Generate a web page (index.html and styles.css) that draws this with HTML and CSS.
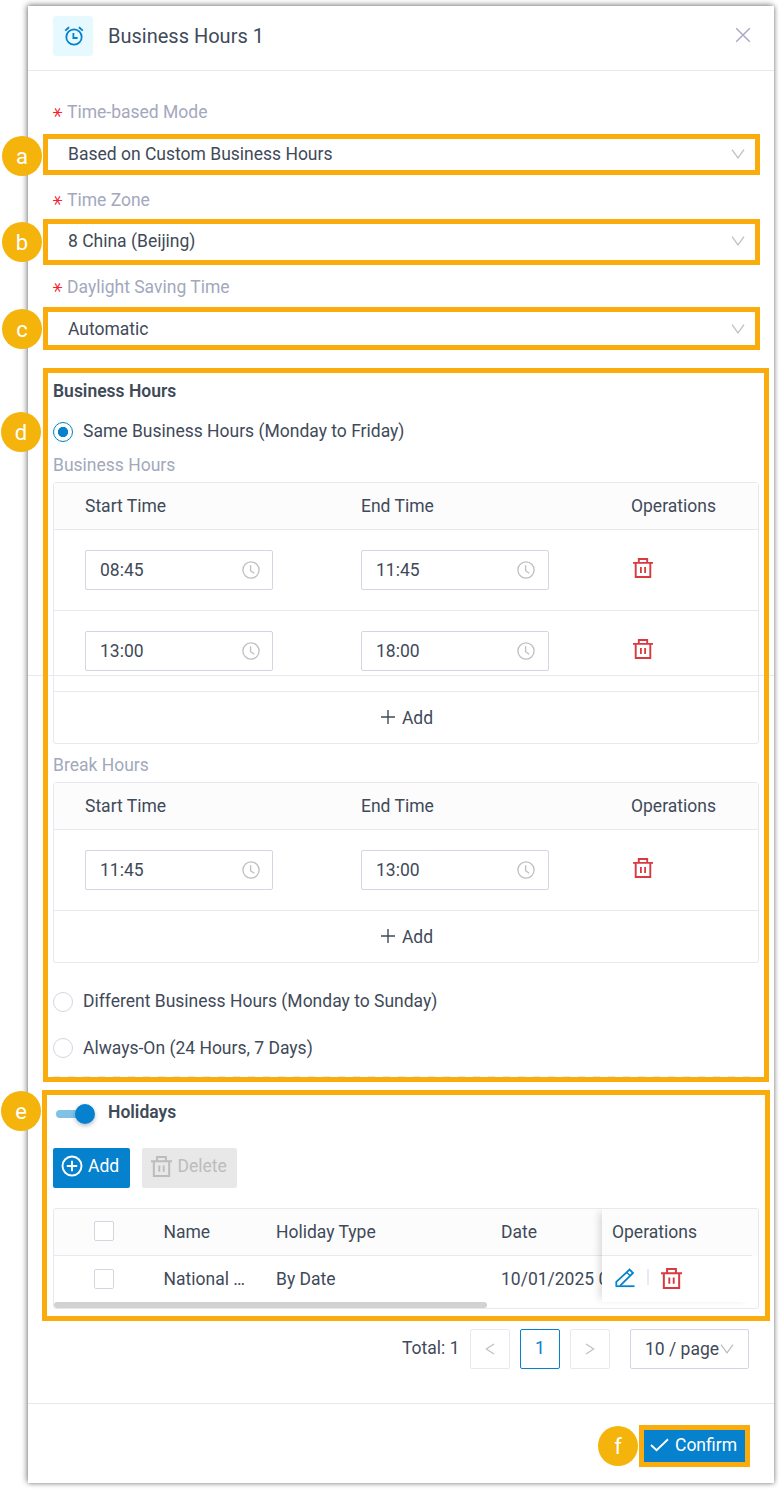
FILE: index.html
```html
<!DOCTYPE html>
<html lang="en">
<head>
<meta charset="utf-8">
<title>Business Hours 1</title>
<link rel="stylesheet" href="styles.css">
</head>
<body>
<svg class="sprite" width="0" height="0">
  <symbol id="trash" viewBox="0 0 20 20"><path d="M0 4.9H20M5.8 4.5V1H14.2V4.5M2.7 5V19H17.3V5" fill="none" stroke="currentColor" stroke-width="1.9"/><path d="M7.9 9V15M12.1 9V15" stroke="currentColor" stroke-width="1.8"/></symbol>
  <symbol id="clock" viewBox="0 0 18 18"><circle cx="9" cy="9" r="8.1" fill="none" stroke="currentColor" stroke-width="1.3"/><path d="M8.6 4.2V9.7L12.2 12.3" fill="none" stroke="currentColor" stroke-width="1.3"/></symbol>
  <symbol id="chevron" viewBox="0 0 14 10"><path d="M1 .7L7 8.8L13 .7" fill="none" stroke="currentColor" stroke-width="1.3"/></symbol>
  <symbol id="plus" viewBox="0 0 16 16"><path d="M8 1V15M1 8H15" fill="none" stroke="currentColor" stroke-width="1.4"/></symbol>
</svg>
<main class="panel">
  <header class="header">
    <span class="logo"><svg width="20" height="20" viewBox="0 0 20 20" fill="none" stroke="currentColor" stroke-width="1.8"><circle cx="10" cy="11" r="7.7"/><path d="M9.4 7V12H13.6M1.2 4.6L5.1 1.3M14.9 1.3L18.8 4.6"/></svg></span>
    <h1 class="title">Business Hours 1</h1>
    <svg class="close" width="16" height="16" viewBox="0 0 16 16"><path d="M1.2 1.2L14.8 14.8M14.8 1.2L1.2 14.8" stroke="currentColor" stroke-width="1.5"/></svg>
  </header>

  <div class="label label-mode"><span class="star">*</span>Time-based Mode</div>
  <div class="mark select select-mode"><b class="badge">a</b><span>Based on Custom Business Hours</span><svg class="arrow" width="14" height="10"><use href="#chevron"/></svg></div>
  <div class="label label-zone"><span class="star">*</span>Time Zone</div>
  <div class="mark select select-zone"><b class="badge">b</b><span>8 China (Beijing)</span><svg class="arrow" width="14" height="10"><use href="#chevron"/></svg></div>
  <div class="label label-dst"><span class="star">*</span>Daylight Saving Time</div>
  <div class="mark select select-dst"><b class="badge">c</b><span>Automatic</span><svg class="arrow" width="14" height="10"><use href="#chevron"/></svg></div>

  <section class="mark hours">
    <b class="badge">d</b>
    <h2 class="heading">Business Hours</h2>
    <div class="option option-same"><i class="radio checked"></i><span>Same Business Hours (Monday to Friday)</span></div>
    <div class="subhead">Business Hours</div>
    <div class="table">
      <div class="row head"><span>Start Time</span><span>End Time</span><span>Operations</span></div>
      <div class="row"><div class="time">08:45<svg width="18" height="18"><use href="#clock"/></svg></div><div class="time time-end">11:45<svg width="18" height="18"><use href="#clock"/></svg></div><svg class="trash" width="20" height="20"><use href="#trash"/></svg></div>
      <div class="row"><div class="time">13:00<svg width="18" height="18"><use href="#clock"/></svg></div><div class="time time-end">18:00<svg width="18" height="18"><use href="#clock"/></svg></div><svg class="trash" width="20" height="20"><use href="#trash"/></svg></div>
      <div class="add"><svg width="16" height="16"><use href="#plus"/></svg>Add</div>
    </div>
    <div class="subhead">Break Hours</div>
    <div class="table">
      <div class="row head"><span>Start Time</span><span>End Time</span><span>Operations</span></div>
      <div class="row"><div class="time">11:45<svg width="18" height="18"><use href="#clock"/></svg></div><div class="time time-end">13:00<svg width="18" height="18"><use href="#clock"/></svg></div><svg class="trash" width="20" height="20"><use href="#trash"/></svg></div>
      <div class="add"><svg width="16" height="16"><use href="#plus"/></svg>Add</div>
    </div>
    <div class="option option-different"><i class="radio"></i><span>Different Business Hours (Monday to Sunday)</span></div>
    <div class="option option-always"><i class="radio"></i><span>Always-On (24 Hours, 7 Days)</span></div>
    <div class="dashes"></div>
    <div class="seam"></div>
  </section>

  <section class="mark holidays">
    <b class="badge">e</b>
    <div class="toggle-row"><span class="toggle"><i class="knob"></i></span><h2 class="toggle-title">Holidays</h2></div>
    <div class="buttons">
      <div class="btn primary"><svg width="22" height="22" viewBox="0 0 22 22" fill="none" stroke="currentColor" stroke-width="1.9"><circle cx="11" cy="11" r="9.5"/><path d="M11 5.8V16.2M5.8 11H16.2"/></svg>Add</div>
      <div class="btn disabled"><svg width="21" height="21"><use href="#trash"/></svg>Delete</div>
    </div>
    <div class="grid">
      <div class="cells cells-head"><i class="check"></i><span>Name</span><span>Holiday Type</span><span>Date</span></div>
      <div class="cells"><i class="check"></i><span>National …</span><span>By Date</span><span>10/01/2025 00:00</span></div>
      <div class="scroll"><div class="thumb"></div></div>
      <div class="fixed">
        <div class="fixed-head">Operations</div>
        <div class="fixed-body">
          <svg class="edit" width="20" height="20" viewBox="0 0 20 20" fill="none" stroke="currentColor"><path d="M1.3 17.6V13.8L14.6 1.6L18 5L5.2 17.6" stroke-width="1.8"/><path d="M11.8 4.4L15 7.6" stroke-width="1.4"/><path d="M.5 18.2H19.5" stroke-width="1.8"/></svg>
          <i class="sep"></i>
          <svg class="trash" width="21" height="21"><use href="#trash"/></svg>
        </div>
      </div>
    </div>
  </section>

  <nav class="pager">
    <span class="total">Total: 1</span>
    <span class="page"><svg width="10" height="14" viewBox="0 0 10 14"><path d="M9 2L1.3 7L9 12" fill="none" stroke="currentColor" stroke-width="1.2"/></svg></span>
    <span class="page current">1</span>
    <span class="page"><svg width="10" height="14" viewBox="0 0 10 14"><path d="M1 2L8.7 7L1 12" fill="none" stroke="currentColor" stroke-width="1.2"/></svg></span>
    <span class="size">10 / page<svg width="14" height="10"><use href="#chevron"/></svg></span>
  </nav>

  <footer class="footer">
    <div class="mark confirm"><b class="badge">f</b><svg width="19" height="14" viewBox="0 0 19 14"><path d="M1 7L6.6 12.2L18 1.2" fill="none" stroke="currentColor" stroke-width="1.9"/></svg>Confirm</div>
  </footer>
</main>
</body>
</html>
```
FILE: styles.css
```css
* { box-sizing: border-box; }
body { margin: 0; background: #fff; color: #3f4a59; font: 17.5px/24px Roboto, "Liberation Sans", sans-serif; height: 1489px; overflow: hidden; }
h1, h2 { margin: 0; font-size: inherit; }
svg { display: block; flex: none; }
.sprite { position: absolute; }
.panel { position: relative; z-index: 0; width: 746px; height: 1477px; margin: 6px 0 0 28px; background: #fff; box-shadow: -1px -1px 6px rgba(0,0,0,.48), 1px 1px 4px rgba(0,0,0,.2); display: flex; flex-direction: column; }

.header { height: 65px; flex: none; border-bottom: 1px solid #e8e8f0; padding: 0 23px 5px 25px; display: flex; align-items: center; }
.logo { width: 40px; height: 40px; padding-left: 1px; border-radius: 3px; background: #e6f9ff; color: #0581cd; display: grid; place-items: center; }
.title { margin-left: 15px; font-size: 20px; font-weight: 400; }
.close { margin-left: auto; margin-bottom: 2px; color: #aaaac6; }

.label { display: flex; align-items: flex-start; padding-left: 25px; color: #a3a8bd; flex: none; }
/* quarter turn puts one arm of the asterisk on the horizontal */
.star { width: 9px; height: 20px; margin: 5px 5px 0 0; color: #f5222d; font: 20px/20px "DejaVu Sans", sans-serif; transform: rotate(90deg); transform-origin: 4.5px 7px; }
.label-mode { height: 63px; padding-top: 29px; }
.label-zone { height: 44px; padding-top: 13px; }
.label-dst { height: 42px; padding-top: 10px; }

.mark { position: relative; border: 5px solid #f9ac0c; flex: none; }
.badge { position: absolute; width: 40px; height: 40px; border-radius: 50%; background: #f5b40c; color: #fff; font-size: 22px; font-weight: 400; line-height: 41px; text-align: center; }
.select { width: 717px; margin-left: 15px; padding: 0 10.5px 0 20px; display: flex; align-items: center; justify-content: space-between; }
.select .badge { left: -46px; }
.select-mode { height: 41px; padding-bottom: 1px; }
.select-mode .badge { top: -3px; }
.select-zone { height: 46px; padding-bottom: 2px; }
.select-zone .badge { top: -2px; }
.select-dst { height: 43px; }
.select-dst .badge { top: -3px; }
.arrow { color: #bfbfbf; }

.hours { width: 726px; height: 714px; margin: 18px 0 0 15px; padding: 0 5px; }
.hours .badge { left: -47px; top: 39px; }
.heading { padding-top: 6px; height: 36px; font-weight: 600; }
.option { display: flex; align-items: center; gap: 10px; height: 24px; }
.option span { margin-bottom: 2px; }
.option-same { margin-top: 11px; }
.radio { width: 20px; height: 20px; border: 1px solid #d5d5e2; border-radius: 50%; }
.checked { border-color: #0581cd; background: radial-gradient(circle, #0581cd 4.8px, #fff 5.4px); }
.subhead { color: #a3a8bd; height: 38px; padding-top: 9px; }
.table { width: 706px; border: 1px solid #e8e8f1; border-radius: 3px; }
.row { display: grid; grid-template-columns: 276px 270px 1fr; align-items: center; height: 81px; padding-left: 31px; border-bottom: 1px solid #e8e8f0; }
.head { height: 47px; background: #fcfcfc; }
.row .trash { margin: 0 0 4px 2px; }
.trash { color: #d93a3f; }
.time { width: 188px; height: 40px; border: 1px solid #d4d4e2; border-radius: 2px; padding: 0 12.5px 0 14px; display: flex; align-items: center; justify-content: space-between; }
.time-end { padding-right: 13px; }
.time svg { color: #bfbfbf; }
.add { height: 51px; padding-left: 1px; display: flex; align-items: center; justify-content: center; gap: 6px; }
.add svg { margin-bottom: 2px; }
.option-different { margin-top: 27px; }
.option-always { margin-top: 22px; }
.option-always span { margin-bottom: 0; }
.dashes { height: 1px; width: 706px; margin-top: 16px; background: repeating-linear-gradient(90deg, #e8e8ea 0 7px, transparent 7px 15px); }
.seam { position: absolute; z-index: -1; left: -20px; top: 302px; width: 746px; height: 1px; background: #e8e8f0; }

.holidays { width: 728px; height: 231px; margin: 8px 0 0 14px; padding: 0 6px; }
.holidays .badge { left: -46px; top: -4px; }
.toggle-row { display: flex; align-items: center; height: 53px; padding: 0 0 15px 3px; }
.toggle { width: 38px; height: 8px; border-radius: 4px; background: #80c1e6; display: flex; align-items: center; justify-content: flex-end; }
.knob { flex: none; width: 20px; height: 20px; margin-right: -1px; border-radius: 50%; background: #0581cd; box-shadow: 0 2px 4px rgba(0,35,75,.3); }
.toggle-title { margin: 0 0 5px 14px; font-weight: 600; }
.buttons { display: flex; gap: 12px; }
.btn { height: 40px; border-radius: 2px; display: flex; align-items: center; padding: 0 0 4px 8px; gap: 5px; }
.primary { width: 77px; background: #0581cd; color: #fff; }
.disabled { width: 95px; background: #e8e8e8; color: #bcbcbc; padding-left: 9px; gap: 5.5px; }
.grid { position: relative; width: 706px; height: 101px; margin-top: 20px; border: 1px solid #e8e8f1; border-radius: 3px; overflow: hidden; }
.cells { display: grid; grid-template-columns: 69.5px 112.5px 225px 1fr; padding-left: 40px; height: 46px; align-items: center; white-space: nowrap; }
.cells-head { height: 47px; padding-bottom: 1px; background: linear-gradient(#e8e8f0, #e8e8f0) 0 100% / 698px 1px no-repeat, #fcfcfc; }
.check { width: 20px; height: 20px; border: 1px solid #d5d5e2; border-radius: 2px; background: #fff; }
.cells-head .check { margin-bottom: 2px; }
.scroll { height: 6px; }
.thumb { width: 433px; height: 6px; border-radius: 3px; background: #d2d2d2; }
.fixed { position: absolute; left: 548px; top: 0; width: 150px; height: 93px; background: #fff; box-shadow: -5px 0 8px -3px rgba(0,0,0,.16); }
.fixed-head { height: 47px; padding: 11px 0 0 10px; background: #fcfcfc; border-bottom: 1px solid #e8e8f0; }
.fixed-body { display: flex; height: 46px; align-items: center; padding: 0 0 2px 12.5px; }
.edit { color: #0581cd; }
.sep { width: 2px; height: 16px; margin: 0 12px 2px 12.5px; background: #e8ebf3; }

.pager { display: flex; height: 40px; margin-top: 8px; padding-right: 25px; justify-content: flex-end; flex: none; }
.total { margin: 7px 10.5px 0 0; }
.page { width: 40px; border: 1px solid #e8e8f0; border-radius: 2px; margin-right: 10px; display: grid; place-items: center; color: #bfbfbf; }
.current { border-color: #0581cd; color: #0581cd; padding-bottom: 2px; }
.size { width: 119px; margin-left: 10px; border: 1px solid #d4d4e2; border-radius: 2px; padding: 0 14px; display: flex; align-items: center; justify-content: space-between; white-space: nowrap; }
.size svg { color: #bfbfbf; }

.footer { margin-top: 34px; border-top: 1px solid #e8e8ea; height: 80px; flex: none; padding: 21px 24px 0 0; display: flex; justify-content: flex-end; }
.confirm { width: 111px; height: 42px; background: #0581cd; color: #fff; display: flex; align-items: center; gap: 6px; padding: 0 0 2px 6px; }
.confirm .badge { left: -46px; top: -4px; }
```
